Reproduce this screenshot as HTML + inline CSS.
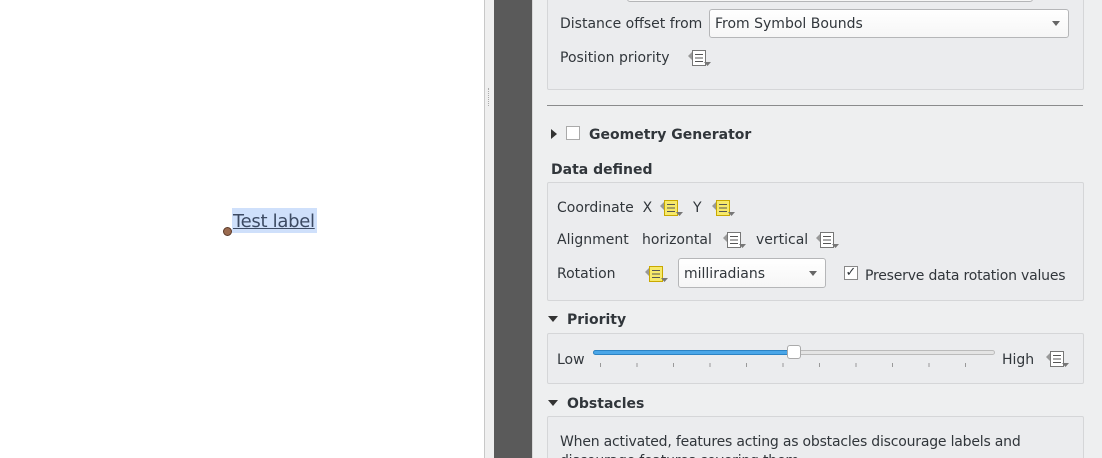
<!DOCTYPE html>
<html style="overflow:hidden;width:1102px;height:458px"><head><meta charset="utf-8"><style>
body{margin:0;width:1102px;height:458px;overflow:hidden;position:relative;background:#eeeff0;font-family:"DejaVu Sans","Liberation Sans",sans-serif;font-size:14px;color:#31363b}
.a{position:absolute}
.t{position:absolute;white-space:nowrap;line-height:18px;top:0}
.b{font-weight:bold}
.box{position:absolute;border:1px solid #d5d6d8;border-radius:2px;background:#ebecee}
.combo{position:absolute;background:linear-gradient(#fff,#f6f6f6);border:1px solid #b5b6b8;border-radius:3px;box-sizing:border-box}
.arr{position:absolute;width:0;height:0;border-left:4px solid transparent;border-right:4px solid transparent;border-top:5px solid #666}
</style></head><body>
<svg width="0" height="0" style="position:absolute"><defs>
<symbol id="dd" viewBox="0 0 24 20"><path d="M1 9 L6 4 L6 14 Z" fill="#999"/><rect x="5.5" y="3.5" width="13" height="15" fill="#fff" stroke="#777"/><path d="M8 7.5h8M8 11h8M8 14.5h8" stroke="#555"/><path d="M17 15h7l-3.5 4z" fill="#777"/></symbol>
<symbol id="ddy" viewBox="0 0 24 20"><path d="M1 9 L6 4 L6 14 Z" fill="#999"/><rect x="5.5" y="3.5" width="13" height="15" fill="#f6e96a" stroke="#c9a800"/><path d="M8 7.5h8M8 11h8M8 14.5h8" stroke="#555"/><path d="M17 15h7l-3.5 4z" fill="#777"/></symbol>
</defs></svg>
<div class="a" style="left:0;top:0;width:484px;height:458px;background:#fff"></div>
<div class="a" style="left:484px;top:0;width:1px;height:458px;background:#c8c8c8"></div>
<div class="a" style="left:485px;top:0;width:9px;height:458px;background:#efefef"></div>
<div class="a" style="left:488px;top:88px;width:1px;height:18px;border-left:1px dotted #aaa"></div>
<div class="a" style="left:494px;top:0;width:38px;height:458px;background:#5a5a5a"></div>
<div class="a" style="left:532px;top:0;width:1px;height:458px;background:#d8d8d8"></div>
<div class="a" style="left:232px;top:208px;width:85px;height:25px;background:#cfe0fb"></div>
<div class="t" style="left:233px;top:211px;font-size:18px;color:#3c4a63;text-decoration:underline;line-height:22px;letter-spacing:-0.3px">Test label</div>
<div class="a" style="left:223px;top:227px;width:9px;height:9px;border-radius:50%;background:#9a6a4f;border:1px solid #5a3a2a;box-sizing:border-box"></div>

<div class="box" style="left:547px;top:-5px;width:535px;height:93px"></div>
<div class="combo" style="left:627px;top:-10px;width:406px;height:12px"></div>
<div class="t" style="left:560px;top:15px">Distance offset from</div>
<div class="combo" style="left:709px;top:9px;width:360px;height:29px"></div>
<div class="t" style="left:715px;top:15px">From Symbol Bounds</div>
<div class="arr" style="left:1052px;top:21px"></div>
<div class="t" style="left:560px;top:49px">Position priority</div>
<svg class="a" style="left:687px;top:47px" width="24" height="20"><use href="#dd"/></svg>
<div class="a" style="left:547px;top:105px;width:536px;height:1px;background:#8a8b8c"></div>

<div class="a" style="left:551px;top:129px;width:0;height:0;border-top:5px solid transparent;border-bottom:5px solid transparent;border-left:6px solid #333"></div>
<div class="a" style="left:566px;top:126px;width:14px;height:14px;background:#fff;border:1px solid #aaa;box-sizing:border-box"></div>
<div class="t b" style="left:589px;top:126px">Geometry Generator</div>
<div class="t b" style="left:551px;top:161px">Data defined</div>
<div class="box" style="left:547px;top:182px;width:535px;height:117px"></div>
<div class="t" style="left:557px;top:199px">Coordinate&nbsp; X</div>
<svg class="a" style="left:659px;top:197px" width="24" height="20"><use href="#ddy"/></svg>
<div class="t" style="left:693px;top:199px">Y</div>
<svg class="a" style="left:711px;top:197px" width="24" height="20"><use href="#ddy"/></svg>
<div class="t" style="left:557px;top:231px">Alignment</div>
<div class="t" style="left:642px;top:231px">horizontal</div>
<svg class="a" style="left:722px;top:229px" width="24" height="20"><use href="#dd"/></svg>
<div class="t" style="left:756px;top:231px">vertical</div>
<svg class="a" style="left:815px;top:229px" width="24" height="20"><use href="#dd"/></svg>
<div class="t" style="left:557px;top:265px">Rotation</div>
<svg class="a" style="left:644px;top:263px" width="24" height="20"><use href="#ddy"/></svg>
<div class="combo" style="left:678px;top:258px;width:148px;height:30px"></div>
<div class="t" style="left:684px;top:265px">milliradians</div>
<div class="arr" style="left:809px;top:271px"></div>
<div class="a" style="left:844px;top:266px;width:14px;height:14px;background:#fff;border:1px solid #888;box-sizing:border-box;font-size:13px;line-height:12px;text-align:center">✓</div>
<div class="t" style="left:865px;top:267px;letter-spacing:-0.2px">Preserve data rotation values</div>

<div class="a" style="left:548px;top:316px;width:0;height:0;border-left:5px solid transparent;border-right:5px solid transparent;border-top:6px solid #333"></div>
<div class="t b" style="left:567px;top:311px">Priority</div>
<div class="box" style="left:547px;top:333px;width:535px;height:49px"></div>
<div class="t" style="left:557px;top:351px">Low</div>
<div class="a" style="left:593px;top:350px;width:402px;height:5px;border:1px solid #bbb;border-radius:3px;background:#e4e4e4;box-sizing:border-box"></div>
<div class="a" style="left:593px;top:350px;width:202px;height:5px;border:1px solid #2c83c4;border-radius:3px;background:#4aa6e8;box-sizing:border-box"></div>
<div class="a" style="left:787px;top:345px;width:14px;height:14px;background:#fff;border:1px solid #aaa;border-radius:3px;box-sizing:border-box"></div>
<div class="a" style="left:600px;top:363px;width:380px;height:4px;background:repeating-linear-gradient(90deg,#999 0 1px,transparent 1px 36.5px)"></div>
<div class="t" style="left:1002px;top:351px">High</div>
<svg class="a" style="left:1045px;top:348px" width="24" height="20"><use href="#dd"/></svg>

<div class="a" style="left:548px;top:400px;width:0;height:0;border-left:5px solid transparent;border-right:5px solid transparent;border-top:6px solid #333"></div>
<div class="t b" style="left:567px;top:395px">Obstacles</div>
<div class="box" style="left:547px;top:416px;width:535px;height:60px"></div>
<div class="t" style="left:560px;top:433px;letter-spacing:-0.2px">When activated, features acting as obstacles discourage labels and</div>
<div class="t" style="left:560px;top:452px;letter-spacing:-0.2px">discourage features covering them</div>
</body></html>
